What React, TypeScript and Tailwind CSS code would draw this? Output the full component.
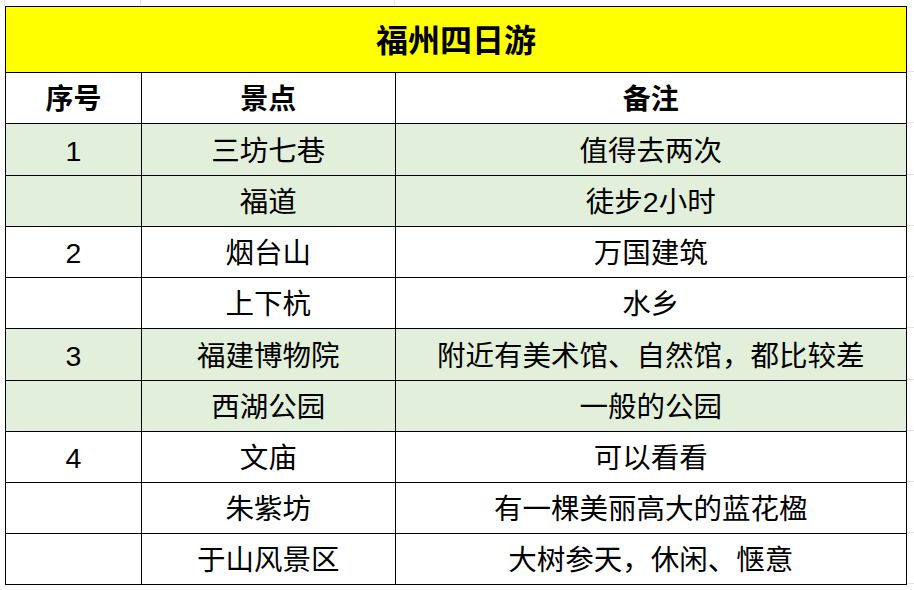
import React from "react";

type Row = { no: string; spot: string; note: string; green: boolean; h: string };

const rows: Row[] = [
  { no: "1", spot: "三坊七巷", note: "值得去两次", green: true, h: "h-[52px]" },
  { no: "", spot: "福道", note: "徒步2小时", green: true, h: "h-[51px]" },
  { no: "2", spot: "烟台山", note: "万国建筑", green: false, h: "h-[51px]" },
  { no: "", spot: "上下杭", note: "水乡", green: false, h: "h-[51px]" },
  { no: "3", spot: "福建博物院", note: "附近有美术馆、自然馆，都比较差", green: true, h: "h-[52px]" },
  { no: "", spot: "西湖公园", note: "一般的公园", green: true, h: "h-[51px]" },
  { no: "4", spot: "文庙", note: "可以看看", green: false, h: "h-[51px]" },
  { no: "", spot: "朱紫坊", note: "有一棵美丽高大的蓝花楹", green: false, h: "h-[51px]" },
  { no: "", spot: "于山风景区", note: "大树参天，休闲、惬意", green: false, h: "h-[51px]" },
];

const font = "font-['Liberation_Sans','Noto_Sans_CJK_SC',sans-serif]";

export default function App() {
  return (
    <div className={`w-[914px] h-[590px] bg-white overflow-hidden ${font} text-black`}>
      {/* top margin with faint spreadsheet gridlines */}
      <div className="flex h-[6px]">
        <div className="w-[5px] border-r border-[#e3e3e3]" />
        <div className="w-[136px] border-r border-[#e3e3e3]" />
        <div className="w-[254px] border-r border-[#e3e3e3]" />
        <div className="w-[512px]" />
        <div className="flex-1" />
      </div>
      <div className="flex">
        <div className="w-[5px]" />
        <div className="w-[902px] border-t border-l border-black">
          <div className="h-[66px] bg-[#ffff00] border-r border-b border-black flex items-center justify-center text-[32px] font-bold leading-none pt-[2px]">
            福州四日游
          </div>
          <div className="flex h-[51px] bg-white text-[28px] font-bold leading-none">
            <div className="w-[136px] border-r border-b border-black flex items-center justify-center pt-[4px]">序号</div>
            <div className="w-[254px] border-r border-b border-black flex items-center justify-center pt-[4px]">景点</div>
            <div className="w-[512px] border-r border-b border-black flex items-center justify-center pt-[4px]">备注</div>
          </div>
          {rows.map((r, i) => (
            <div
              key={i}
              className={`flex ${r.h} text-[28.5px] leading-none ${r.green ? "bg-[#e2efda]" : "bg-white"}`}
            >
              <div className="w-[136px] border-r border-b border-black flex items-center justify-center pt-[3px]">{r.no}</div>
              <div className="w-[254px] border-r border-b border-black flex items-center justify-center pt-[3px]">{r.spot}</div>
              <div className="w-[512px] border-r border-b border-black flex items-center justify-center pt-[3px]">{r.note}</div>
            </div>
          ))}
        </div>
        <div className="flex-1 flex flex-col">
          <div className="h-[66px] border-b border-[#e3e3e3]" />
          <div className="h-[51px] border-b border-[#e3e3e3]" />
          {rows.map((r, i) => (
            <div key={i} className={`${r.h} border-b border-[#e3e3e3]`} />
          ))}
        </div>
      </div>
    </div>
  );
}
